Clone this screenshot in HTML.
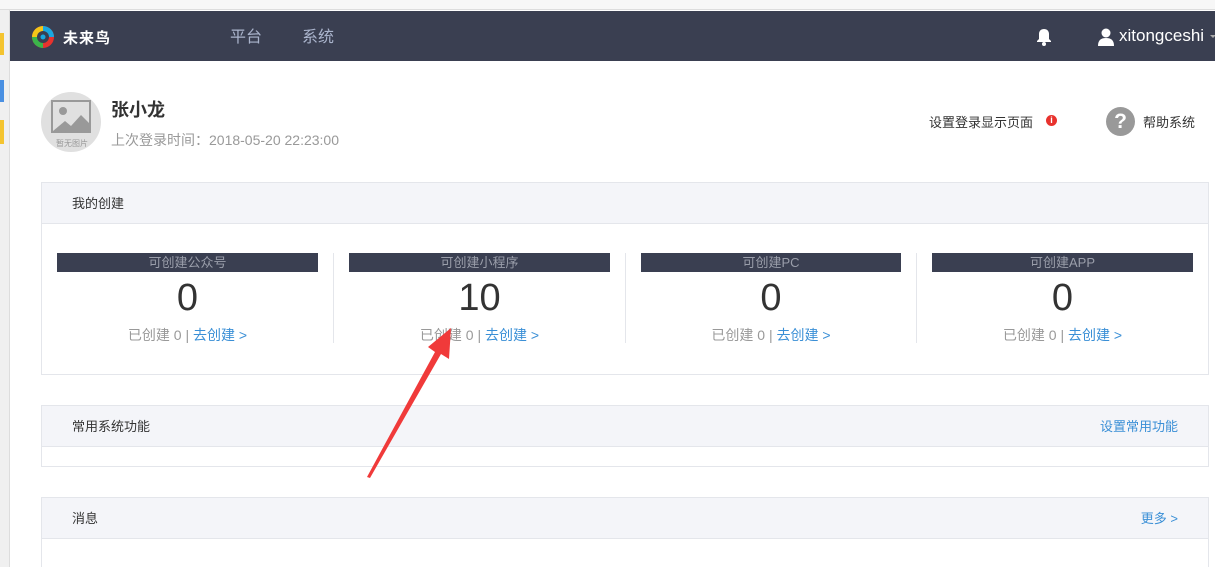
<!DOCTYPE html>
<html style="overflow:hidden;height:567px"><head><meta charset="utf-8"><style>
*{margin:0;padding:0;box-sizing:border-box}
body{width:1215px;height:567px;overflow:hidden;background:#fff;font-family:"Liberation Sans","Noto Sans CJK SC",sans-serif;position:relative;color:#333}
.abs{position:absolute}
.hdr{left:10px;top:11px;width:1205px;height:50px;background:#3a3f51}
.card{position:absolute;left:41px;width:1168px;border:1px solid #e4e6eb;background:#fff}
.card .h{height:41px;background:#f4f5f9;border-bottom:1px solid #e4e6eb;font-size:13px;line-height:41px;padding-left:30px;color:#333;position:relative}
.card .h a{position:absolute;right:30px;top:0;color:#3a8fd6;font-size:13px}
.col{position:absolute;top:70px;width:261px;text-align:center}
.bar{height:19px;background:#3a3f51;color:#9a9eaa;font-size:13px;line-height:19px}
.num{font-size:38px;color:#333;line-height:50px;margin-top:1px}
.lk{font-size:14px;color:#999;line-height:22px;margin-top:1px}
.lk span{color:#3a8fd6}
.div{position:absolute;top:70px;width:1px;height:90px;background:#e4e6eb}
</style></head><body>
<div class="abs" style="left:0;top:0;width:1215px;height:10px;background:#f7f7f7;border-bottom:1px solid #ddd"></div>
<div class="abs" style="left:0;top:10px;width:10px;height:557px;background:#f0f0f0;border-right:1px solid #ddd"></div>
<div class="abs" style="left:0;top:33px;width:4px;height:22px;background:#f4c430"></div>
<div class="abs" style="left:0;top:80px;width:4px;height:22px;background:#4a90e2"></div>
<div class="abs" style="left:0;top:120px;width:4px;height:24px;background:#f4c430"></div>
<div class="abs hdr"></div>
<svg class="abs" style="left:31px;top:24px" width="26" height="26" viewBox="0 0 26 26"><circle cx="12" cy="13" r="11" fill="#e8322d"/><path d="M12 2a11 11 0 0 1 11 11H12z" fill="#19a8e0"/><path d="M1 13A11 11 0 0 1 12 2v11z" fill="#f5c518"/><path d="M12 24A11 11 0 0 1 1 13h11z" fill="#3bb54a"/><circle cx="12" cy="13" r="6" fill="#3a3f51"/><circle cx="12" cy="13" r="2.5" fill="#19a8e0"/></svg>
<div class="abs" style="left:63px;top:27px;color:#fff;font-size:15px;font-weight:bold;letter-spacing:1px">未来鸟</div>
<div class="abs" style="left:230px;top:23px;color:#aab4cc;font-size:16px">平台</div>
<div class="abs" style="left:302px;top:23px;color:#aab4cc;font-size:16px">系统</div>
<svg class="abs" style="left:1036px;top:28px" width="16" height="18" viewBox="0 0 16 18"><path d="M8 1c-3 0-5 2-5 5v5l-2 2v1h14v-1l-2-2V6c0-3-2-5-5-5z" fill="#fff"/><circle cx="8" cy="16" r="2" fill="#fff"/></svg>
<svg class="abs" style="left:1098px;top:28px" width="16" height="18" viewBox="0 0 16 18"><circle cx="8" cy="5" r="4.5" fill="#fff"/><path d="M0 18c0-6 3-8 8-8s8 2 8 8z" fill="#fff"/></svg>
<div class="abs" style="left:1119px;top:26px;color:#fff;font-size:17px">xitongceshi</div>
<div class="abs" style="left:1210px;top:35px;border:3px solid transparent;border-top-color:#aaa"></div>
<div class="abs" style="left:41px;top:92px;width:60px;height:60px;border-radius:50%;background:#e0e0e0"></div>
<svg class="abs" style="left:51px;top:100px" width="40" height="33" viewBox="0 0 40 33"><rect x="1" y="1" width="38" height="31" fill="none" stroke="#999" stroke-width="2"/><circle cx="12" cy="11" r="4" fill="#999"/><path d="M2 31l12-10 6 5 10-11 9 9v8z" fill="#999"/></svg>
<div class="abs" style="left:56px;top:138px;font-size:8px;color:#999">暂无图片</div>
<div class="abs" style="left:111px;top:96px;font-size:18px;font-weight:bold;color:#333">张小龙</div>
<div class="abs" style="left:111px;top:130px;font-size:14px;color:#999">上次登录时间：2018-05-20 22:23:00</div>
<div class="abs" style="left:929px;top:112px;font-size:13px;color:#333">设置登录显示页面</div>
<div class="abs" style="left:1046px;top:115px;width:11px;height:11px;border-radius:50%;background:#e8322d;color:#fff;font-size:9px;line-height:11px;text-align:center;font-weight:bold">i</div>
<div class="abs" style="left:1106px;top:107px;width:29px;height:29px;border-radius:50%;background:#999;color:#fff;font-size:21px;font-weight:bold;line-height:29px;text-align:center">?</div>
<div class="abs" style="left:1143px;top:112px;font-size:13px;color:#333">帮助系统</div>

<div class="card" style="top:182px;height:193px">
<div class="h">我的创建</div>
<div class="col" style="left:15px"><div class="bar">可创建公众号</div><div class="num">0</div><div class="lk">已创建 0 | <span>去创建 &gt;</span></div></div>
<div class="div" style="left:291px"></div>
<div class="col" style="left:307px"><div class="bar">可创建小程序</div><div class="num">10</div><div class="lk">已创建 0 | <span>去创建 &gt;</span></div></div>
<div class="div" style="left:583px"></div>
<div class="col" style="left:599px;width:260px"><div class="bar">可创建PC</div><div class="num">0</div><div class="lk">已创建 0 | <span>去创建 &gt;</span></div></div>
<div class="div" style="left:874px"></div>
<div class="col" style="left:890px"><div class="bar">可创建APP</div><div class="num">0</div><div class="lk">已创建 0 | <span>去创建 &gt;</span></div></div>
</div>
<div class="card" style="top:405px;height:62px"><div class="h">常用系统功能<a>设置常用功能</a></div></div>
<div class="card" style="top:497px;height:80px"><div class="h">消息<a>更多 &gt;</a></div></div>
<svg class="abs" style="left:0;top:0" width="1215" height="567"><path d="M367 477L435 352L428 347L451 328L449 359L441 354L370 478Z" fill="#f03a3a"/></svg>
</body></html>
